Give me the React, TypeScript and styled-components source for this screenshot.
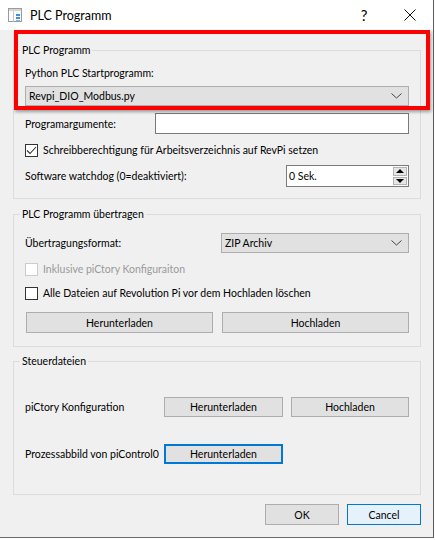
import React from "react";
import styled, { createGlobalStyle } from "styled-components";

const GlobalStyle = createGlobalStyle`
  html, body {
    margin: 0;
    padding: 0;
    background: #ffffff;
  }
  body {
    font-family: Lato, "Noto Sans", "Liberation Sans", sans-serif;
    font-size: 10.5px;
    color: #000;
  }
`;

const Window = styled.div`
  position: relative;
  width: 434px;
  height: 538px;
  box-sizing: border-box;
  border-right: 1px solid #5a5a5a;
  border-bottom: 1px solid #6a6a6a;
  background: #f0f0f0;
  display: flex;
  flex-direction: column;
  overflow: hidden;
`;

const TitleBar = styled.div`
  height: 30px;
  flex: none;
  background: #ffffff;
  display: flex;
  align-items: center;
  padding-left: 8px;
  font-size: 12.5px;
  .title {
    margin-left: 7px;
    flex: 1;
  }
  .help {
    width: 46px;
    text-align: center;
    font-size: 15px;
  }
  .close {
    width: 46px;
    display: flex;
    justify-content: center;
  }
`;

const Body = styled.div`
  flex: 1;
  padding: 20px 12px 0 13px;
  display: flex;
  flex-direction: column;
`;

const Group = styled.div<{ $top: number; $pt: number; $pb: number }>`
  position: relative;
  margin-top: ${(p) => p.$top}px;
  border: 1px solid #dcdcdc;
  padding: ${(p) => p.$pt}px 11px ${(p) => p.$pb}px 11px;
  display: flex;
  flex-direction: column;
`;

const Legend = styled.span`
  position: absolute;
  top: -9px;
  left: 6px;
  padding: 0 2px;
  line-height: 16px;
  background: #f0f0f0;
`;

const Row = styled.div<{ $h: number; $top?: number }>`
  display: flex;
  align-items: center;
  height: ${(p) => p.$h}px;
  margin-top: ${(p) => p.$top ?? 0}px;
`;

const Label = styled.span<{ $w?: number; $disabled?: boolean }>`
  ${(p) => (p.$w ? `width: ${p.$w}px; flex: none;` : "flex: 1;")}
  color: ${(p) => (p.$disabled ? "#9a9a9a" : "#000")};
  white-space: nowrap;
`;

const Combo = styled.div<{ $w?: number }>`
  ${(p) => (p.$w ? `width: ${p.$w}px;` : "flex: 1;")}
  height: 100%;
  box-sizing: border-box;
  background: #e1e1e1;
  border: 1px solid #adadad;
  display: flex;
  align-items: center;
  padding: 0 6px 0 3px;
  span {
    flex: 1;
  }
`;

const TextInput = styled.div`
  flex: 1;
  height: 100%;
  box-sizing: border-box;
  background: #fff;
  border: 1px solid #7a7a7a;
`;

const Spin = styled.div`
  width: 123px;
  height: 100%;
  box-sizing: border-box;
  background: #fff;
  border: 1px solid #7a7a7a;
  display: flex;
  align-items: center;
  padding: 1px 1px 1px 2px;
  span {
    flex: 1;
  }
`;

const SpinButtons = styled.div`
  width: 14px;
  height: 100%;
  display: flex;
  flex-direction: column;
  gap: 1px;
`;

const SpinButton = styled.div`
  flex: 1;
  background: #e6e6e6;
  border: 1px solid #b4b4b4;
  display: flex;
  align-items: center;
  justify-content: center;
`;

const Check = styled.div<{ $disabled?: boolean }>`
  width: 13px;
  height: 13px;
  box-sizing: border-box;
  background: #fff;
  border: 1px solid ${(p) => (p.$disabled ? "#cccccc" : "#333333")};
  margin-right: 5px;
  display: flex;
  align-items: center;
  justify-content: center;
`;

const Button = styled.div<{ $w?: number; $gap?: number; $focus?: boolean; $default?: boolean }>`
  ${(p) => (p.$w ? `width: ${p.$w}px; flex: none;` : "flex: 1;")}
  margin-left: ${(p) => p.$gap ?? 0}px;
  height: 100%;
  box-sizing: border-box;
  display: flex;
  align-items: center;
  justify-content: center;
  background: ${(p) => (p.$default ? "#e5f1fb" : "#e1e1e1")};
  border: ${(p) =>
    p.$focus ? "2px solid #0078d7" : p.$default ? "1px solid #0078d7" : "1px solid #adadad"};
`;

const ButtonPair = styled.div`
  display: grid;
  grid-template-columns: 1fr 1fr;
  gap: 9px;
  height: 21px;
  margin-top: 11px;
  padding-left: 1px;
`;

const Footer = styled.div`
  display: flex;
  justify-content: flex-end;
  gap: 8px;
  height: 21px;
  margin-top: 9px;
`;

const Highlight = styled.div`
  position: absolute;
  left: 14px;
  top: 30px;
  width: 416px;
  height: 80px;
  box-sizing: border-box;
  border: 4px solid #ff0000;
  box-shadow: 1px 2px 3px rgba(0, 0, 0, 0.35);
  pointer-events: none;
`;

const Chevron = () => (
  <svg width="11" height="6" viewBox="0 0 11 6">
    <polyline points="0.5,0.5 5.5,5 10.5,0.5" fill="none" stroke="#444" strokeWidth="1" />
  </svg>
);

const Tick = () => (
  <svg width="11" height="9" viewBox="0 0 11 9">
    <polyline points="1,4.5 4,7.5 10,1" fill="none" stroke="#333" strokeWidth="1.1" />
  </svg>
);

const Tri = ({ up }: { up?: boolean }) => (
  <svg width="8" height="4" viewBox="0 0 8 4">
    <polygon points={up ? "0,4 8,4 4,0" : "0,0 8,0 4,4"} fill="#000" />
  </svg>
);

const AppIcon = () => (
  <svg width="15" height="15" viewBox="0 0 15 15">
    <rect x="0.5" y="0.5" width="13" height="13" fill="#fbfbfb" stroke="#9a9a9a" />
    <rect x="1" y="1" width="12" height="2" fill="#d6d6d6" />
    <line x1="5.5" y1="3" x2="5.5" y2="13.5" stroke="#c4c4c4" />
    <rect x="8" y="6" width="4" height="2" fill="#3c8ee0" />
    <rect x="8" y="9" width="4" height="2" fill="#3c8ee0" />
    <rect x="8" y="12" width="4" height="1" fill="#7cb4ec" />
  </svg>
);

const CloseIcon = () => (
  <svg width="12" height="12" viewBox="0 0 12 12">
    <path d="M0.5 0.5 L11.5 11.5 M11.5 0.5 L0.5 11.5" stroke="#111" strokeWidth="1" />
  </svg>
);

export default function App() {
  return (
    <>
      <GlobalStyle />
      <Window>
        <TitleBar>
          <AppIcon />
          <span className="title">PLC Programm</span>
          <span className="help">?</span>
          <span className="close">
            <CloseIcon />
          </span>
        </TitleBar>
        <Body>
          <Group $top={0} $pt={14} $pb={11}>
            <Legend>PLC Programm</Legend>
            <Row $h={16}>
              <Label>Python PLC Startprogramm:</Label>
            </Row>
            <Row $h={20} $top={5}>
              <Combo>
                <span>Revpi_DIO_Modbus.py</span>
                <Chevron />
              </Combo>
            </Row>
            <Row $h={21} $top={7}>
              <Label $w={130}>Programargumente:</Label>
              <TextInput />
            </Row>
            <Row $h={16} $top={8}>
              <Check>
                <Tick />
              </Check>
              <Label>Schreibberechtigung für Arbeitsverzeichnis auf RevPi setzen</Label>
            </Row>
            <Row $h={22} $top={7}>
              <Label>Software watchdog (0=deaktiviert):</Label>
              <Spin>
                <span>0 Sek.</span>
                <SpinButtons>
                  <SpinButton>
                    <Tri up />
                  </SpinButton>
                  <SpinButton>
                    <Tri />
                  </SpinButton>
                </SpinButtons>
              </Spin>
            </Row>
          </Group>

          <Group $top={15} $pt={18} $pb={13}>
            <Legend>PLC Programm übertragen</Legend>
            <Row $h={20}>
              <Label>Übertragungsformat:</Label>
              <Combo $w={188}>
                <span>ZIP Archiv</span>
                <Chevron />
              </Combo>
            </Row>
            <Row $h={16} $top={8}>
              <Check $disabled />
              <Label $disabled>Inklusive piCtory Konfiguraiton</Label>
            </Row>
            <Row $h={16} $top={8}>
              <Check />
              <Label>Alle Dateien auf Revolution Pi vor dem Hochladen löschen</Label>
            </Row>
            <ButtonPair>
              <Button>Herunterladen</Button>
              <Button>Hochladen</Button>
            </ButtonPair>
          </Group>

          <Group $top={14} $pt={35} $pb={30}>
            <Legend>Steuerdateien</Legend>
            <Row $h={20}>
              <Label $w={139}>piCtory Konfiguration</Label>
              <Button $w={119}>Herunterladen</Button>
              <Button $w={118} $gap={8}>
                Hochladen
              </Button>
            </Row>
            <Row $h={20} $top={27}>
              <Label $w={139}>Prozessabbild von piControl0</Label>
              <Button $w={119} $focus>
                Herunterladen
              </Button>
              <Label />
            </Row>
          </Group>

          <Footer>
            <Button $w={74}>OK</Button>
            <Button $w={74} $default>
              Cancel
            </Button>
          </Footer>
        </Body>
        <Highlight />
      </Window>
    </>
  );
}
